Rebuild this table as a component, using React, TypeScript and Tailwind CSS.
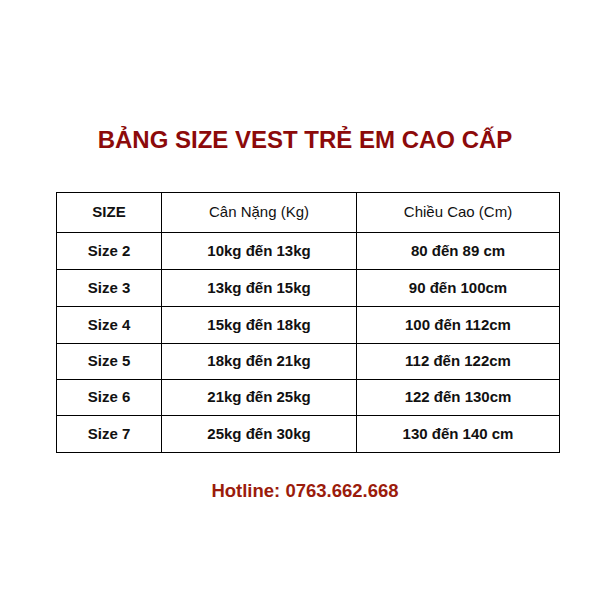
const rows = [
  ["Size 2", "10kg đến 13kg", "80 đến 89 cm", "h-[37px]"],
  ["Size 3", "13kg đến 15kg", "90 đến 100cm", "h-[37px]"],
  ["Size 4", "15kg đến 18kg", "100 đến 112cm", "h-[37px]"],
  ["Size 5", "18kg đến 21kg", "112 đến 122cm", "h-[36px]"],
  ["Size 6", "21kg đến 25kg", "122 đến 130cm", "h-[36px]"],
  ["Size 7", "25kg đến 30kg", "130 đến 140 cm", "h-[37px]"],
];

export default function App() {
  return (
    <div className="w-[614px] h-[614px] bg-white flex flex-col items-center font-['Liberation_Sans',Arial,sans-serif]">
      <h1 className="mt-[125px] mr-[4px] text-[24px] leading-[30px] font-bold text-[#8c0a0a]">
        BẢNG SIZE VEST TRẺ EM CAO CẤP
      </h1>

      <table className="mt-[37px] ml-[2px] border-collapse text-[15px] text-[#111]">
        <thead>
          <tr className="h-[40px]">
            <th className="w-[105px] border border-black font-bold">SIZE</th>
            <th className="w-[195px] border border-black font-normal">Cân Nặng (Kg)</th>
            <th className="w-[203px] border border-black font-normal">Chiều Cao (Cm)</th>
          </tr>
        </thead>
        <tbody>
          {rows.map((r) => (
            <tr key={r[0]} className={`${r[3]} font-bold`}>
              <td className="border border-black text-center">{r[0]}</td>
              <td className="border border-black text-center">{r[1]}</td>
              <td className="border border-black text-center">{r[2]}</td>
            </tr>
          ))}
        </tbody>
      </table>

      <p className="mt-[24px] mr-[4px] text-[18.5px] font-bold text-[#9b1c0c]">Hotline: 0763.662.668</p>
    </div>
  );
}
